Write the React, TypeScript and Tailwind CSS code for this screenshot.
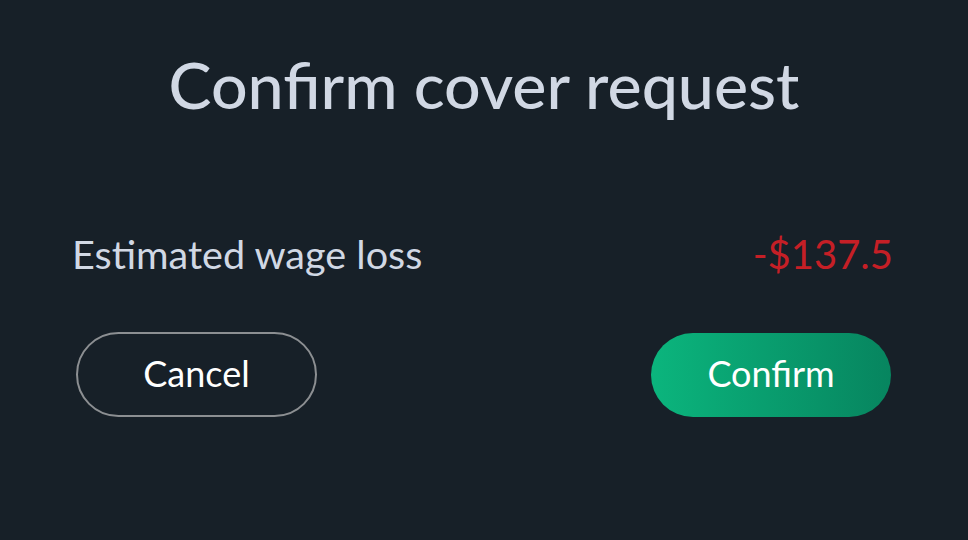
export default function App() {
  return (
    <div className="w-[968px] h-[540px] bg-[#172028] font-['Lato',sans-serif] px-[74px] pt-[44px]">
      <h1 className="text-center text-[64.5px] leading-[80px] text-[#d1d8e4] font-medium">
        Confirm cover request
      </h1>

      <div className="mt-[100px] flex items-center justify-between pr-[1px]">
        <span className="-ml-[2px] text-[39.6px] leading-[60px] text-[#d1d8e4]">Estimated wage loss</span>
        <span className="text-[40px] leading-[60px] text-[#c51f26]">-$137.5</span>
      </div>

      <div className="mt-[48px] flex items-center justify-between pr-[3px]">
        <button className="ml-[2px] w-[241px] h-[85px] pb-[4px] rounded-full border-2 border-[#8c8f92] text-white text-[36px]">
          Cancel
        </button>
        <button className="w-[240px] h-[84px] pb-[4px] rounded-full bg-gradient-to-r from-[#0bb57d] to-[#07855f] text-white text-[36px]">
          Confirm
        </button>
      </div>
    </div>
  );
}
